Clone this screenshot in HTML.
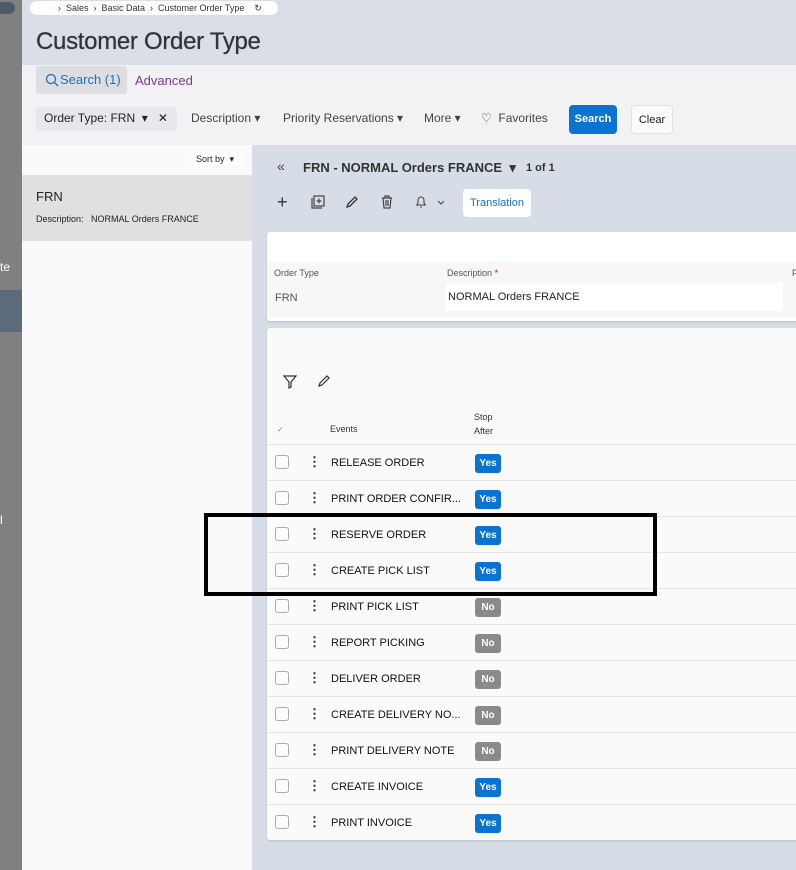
<!DOCTYPE html>
<html><head><meta charset="utf-8"><style>
*{box-sizing:border-box;margin:0;padding:0}
body{width:796px;height:870px;overflow:hidden;font-family:"Liberation Sans",sans-serif;background:#d6dde6;position:relative;color:#222}
.abs{position:absolute}
.side{left:0;top:0;width:22px;height:870px;background:#808080}
.top{left:22px;top:0;width:774px;height:65px;background:#d9dee7}
.crumb{left:30px;top:1px;width:248px;height:14px;background:#fff;border-radius:8px;font-size:9px;color:#333;line-height:14px;padding-left:28px}
h1{position:absolute;left:36px;top:28px;font-size:24px;font-weight:normal;color:#333;letter-spacing:-0.3px;text-shadow:0 0 0.6px #333}
.filt{left:22px;top:65px;width:774px;height:80px;background:#f2f2f5}
.tab{left:36px;top:66px;width:91px;height:28px;background:#dedee2;border-radius:3px;color:#1a6fc0;font-size:13px;line-height:28px;padding-left:24px}
.adv{left:135px;top:73px;font-size:13px;color:#7b3a8f}
.f{top:111px;font-size:12px;color:#444}
.chip{left:36px;top:107px;width:141px;height:24px;background:#e7e7ec;border-radius:3px;padding:4px 0 0 8px;font-size:12px;color:#222}
.btn{top:105px;height:29px;border-radius:4px;font-size:11px;line-height:29px;text-align:center}
.list{left:22px;top:145px;width:230px;height:725px;background:#fafafa}
.sel{left:22px;top:175px;width:230px;height:66px;background:#e0e0e0}
.card{background:#fff;border-radius:3px;box-shadow:0 1px 2px rgba(0,0,0,.15)}
.row{position:absolute;left:267px;width:529px;height:36px;border-top:1px solid #e6e6e6;font-size:11px}
.cb{position:absolute;left:8px;top:10px;width:14px;height:14px;border:1px solid #aaa;border-radius:3px;background:#fff}
.dots{position:absolute;left:41px;top:9px;font-size:13px;font-weight:bold;line-height:16px}
.ev{position:absolute;left:64px;top:12px;color:#111}
.b{position:absolute;left:208px;top:9px;width:26px;height:19px;border-radius:3px;color:#fff;font-size:10px;font-weight:bold;text-align:center;line-height:19px}
.y{background:#0b73d1}.n{background:#8a8a8a}
</style></head><body>
<div class="abs side"></div>
<div class="abs" style="left:0;top:2px;width:15px;height:12px;background:#4e5a66;border-radius:0 6px 6px 0"></div>
<div class="abs" style="left:0;top:290px;width:22px;height:42px;background:#5b6b7b"></div>
<div class="abs" style="left:0;top:260px;color:#fff;font-size:12px">te</div>
<div class="abs" style="left:0;top:513px;color:#fff;font-size:12px">l</div>
<div class="abs top"></div>
<div class="abs crumb">›&nbsp; Sales &nbsp;›&nbsp; Basic Data &nbsp;›&nbsp; Customer Order Type &nbsp;&nbsp; ↻</div>
<h1>Customer Order Type</h1>
<div class="abs filt"></div>
<div class="abs tab">Search (1)</div>
<svg class="abs" style="left:45px;top:73px" width="14" height="14" viewBox="0 0 14 14" fill="none" stroke="#1a6fc0" stroke-width="1.3"><circle cx="6" cy="6" r="4.5"/><path d="M9.3 9.3L13 13"/></svg>
<div class="abs adv">Advanced</div>
<div class="abs chip">Order Type: FRN &nbsp;▾ &nbsp;&nbsp;✕</div>
<div class="abs f" style="left:191px">Description ▾</div>
<div class="abs f" style="left:283px">Priority Reservations ▾</div>
<div class="abs f" style="left:424px">More ▾</div>
<div class="abs f" style="left:481px">♡ &nbsp;Favorites</div>
<div class="abs btn" style="left:569px;width:48px;background:#0b73d1;color:#fff;font-weight:bold">Search</div>
<div class="abs btn" style="left:631px;width:42px;background:#fafafa;border:1px solid #e2e2e2;color:#222">Clear</div>
<div class="abs list"></div>
<div class="abs" style="left:190px;top:152px;width:54px;height:14px;background:#fff;border-radius:7px;font-size:9px;line-height:14px;padding-left:6px">Sort by &nbsp;▾</div>
<div class="abs sel"></div>
<div class="abs" style="left:36px;top:189px;font-size:13px">FRN</div>
<div class="abs" style="left:36px;top:214px;font-size:9px">Description: &nbsp;&nbsp;NORMAL Orders FRANCE</div>
<div class="abs" style="left:277px;top:158px;font-size:14px;color:#444">«</div>
<div class="abs" style="left:303px;top:160px;font-size:13px;font-weight:bold;color:#333">FRN - NORMAL Orders FRANCE &nbsp;▾</div>
<div class="abs" style="left:526px;top:162px;font-size:11px;font-weight:bold;color:#333">1 of 1</div>
<div class="abs" style="left:277px;top:193px;font-size:18px;color:#333;line-height:18px">+</div>
<svg class="abs" style="left:311px;top:195px" width="14" height="14" viewBox="0 0 14 14" fill="none" stroke="#444" stroke-width="1.2"><rect x="3" y="1" width="10" height="10"/><path d="M1 3v10h10M8 3.5v5M5.5 6h5"/></svg>
<svg class="abs" style="left:345px;top:196px" width="13" height="13" viewBox="0 0 13 13" fill="none" stroke="#333" stroke-width="1.3"><path d="M2 11l1-3 7-7 2 2-7 7z"/></svg>
<svg class="abs" style="left:381px;top:195px" width="12" height="14" viewBox="0 0 12 14" fill="none" stroke="#444" stroke-width="1.2"><path d="M1 3h10M4 3V1h4v2M2 3l1 10h6l1-10M5 5v6M7 5v6"/></svg>
<svg class="abs" style="left:414px;top:195px" width="30" height="14" viewBox="0 0 30 14" fill="none" stroke="#444" stroke-width="1.1"><path d="M2 10h10M3 10l1-2V5a3 3 0 0 1 6 0v3l1 2M6 12h2M24 6l3 3 3-3"/></svg>
<div class="abs" style="left:463px;top:189px;width:68px;height:28px;background:#fff;border-radius:4px;color:#1a6fc0;font-size:11px;line-height:28px;text-align:center">Translation</div>
<div class="abs card" style="left:267px;top:232px;width:540px;height:89px"></div>
<div class="abs" style="left:267px;top:262px;width:529px;height:56px;background:#f7f7f7"></div>
<div class="abs" style="left:274px;top:268px;font-size:9px;color:#555">Order Type</div>
<div class="abs" style="left:275px;top:292px;font-size:11px;color:#555">FRN</div>
<div class="abs" style="left:447px;top:268px;font-size:9px;color:#555">Description <span style="color:#c00">*</span></div>
<div class="abs" style="left:446px;top:283px;width:337px;height:28px;background:#fff;font-size:11px;padding:8px 0 0 2px">NORMAL Orders FRANCE</div>
<div class="abs" style="left:792px;top:268px;font-size:9px;color:#555">F</div>
<div class="abs card" style="left:267px;top:328px;width:540px;height:512px;background:#fafafa"></div>
<svg class="abs" style="left:283px;top:375px" width="14" height="14" viewBox="0 0 14 14" fill="none" stroke="#333" stroke-width="1.2"><path d="M1 1h12L8 7v5l-2 1V7z"/></svg>
<svg class="abs" style="left:317px;top:375px" width="13" height="13" viewBox="0 0 13 13" fill="none" stroke="#333" stroke-width="1.2"><path d="M2 11l1-3 7-7 2 2-7 7z"/></svg>
<div class="abs" style="left:277px;top:425px;font-size:8px;color:#888">✓</div>
<div class="abs" style="left:330px;top:424px;font-size:9px;color:#333">Events</div>
<div class="abs" style="left:474px;top:410px;font-size:9px;color:#333;line-height:14px">Stop<br>After</div>
<div class="row" style="top:444px"><div class="cb"></div><div class="dots">⋮</div><div class="ev">RELEASE ORDER</div><div class="b y">Yes</div></div>
<div class="row" style="top:480px"><div class="cb"></div><div class="dots">⋮</div><div class="ev">PRINT ORDER CONFIR...</div><div class="b y">Yes</div></div>
<div class="row" style="top:516px"><div class="cb"></div><div class="dots">⋮</div><div class="ev">RESERVE ORDER</div><div class="b y">Yes</div></div>
<div class="row" style="top:552px"><div class="cb"></div><div class="dots">⋮</div><div class="ev">CREATE PICK LIST</div><div class="b y">Yes</div></div>
<div class="row" style="top:588px"><div class="cb"></div><div class="dots">⋮</div><div class="ev">PRINT PICK LIST</div><div class="b n">No</div></div>
<div class="row" style="top:624px"><div class="cb"></div><div class="dots">⋮</div><div class="ev">REPORT PICKING</div><div class="b n">No</div></div>
<div class="row" style="top:660px"><div class="cb"></div><div class="dots">⋮</div><div class="ev">DELIVER ORDER</div><div class="b n">No</div></div>
<div class="row" style="top:696px"><div class="cb"></div><div class="dots">⋮</div><div class="ev">CREATE DELIVERY NO...</div><div class="b n">No</div></div>
<div class="row" style="top:732px"><div class="cb"></div><div class="dots">⋮</div><div class="ev">PRINT DELIVERY NOTE</div><div class="b n">No</div></div>
<div class="row" style="top:768px"><div class="cb"></div><div class="dots">⋮</div><div class="ev">CREATE INVOICE</div><div class="b y">Yes</div></div>
<div class="row" style="top:804px"><div class="cb"></div><div class="dots">⋮</div><div class="ev">PRINT INVOICE</div><div class="b y">Yes</div></div>
<div class="abs" style="left:204px;top:513px;width:453px;height:83px;border:4px solid #000"></div>
</body></html>
